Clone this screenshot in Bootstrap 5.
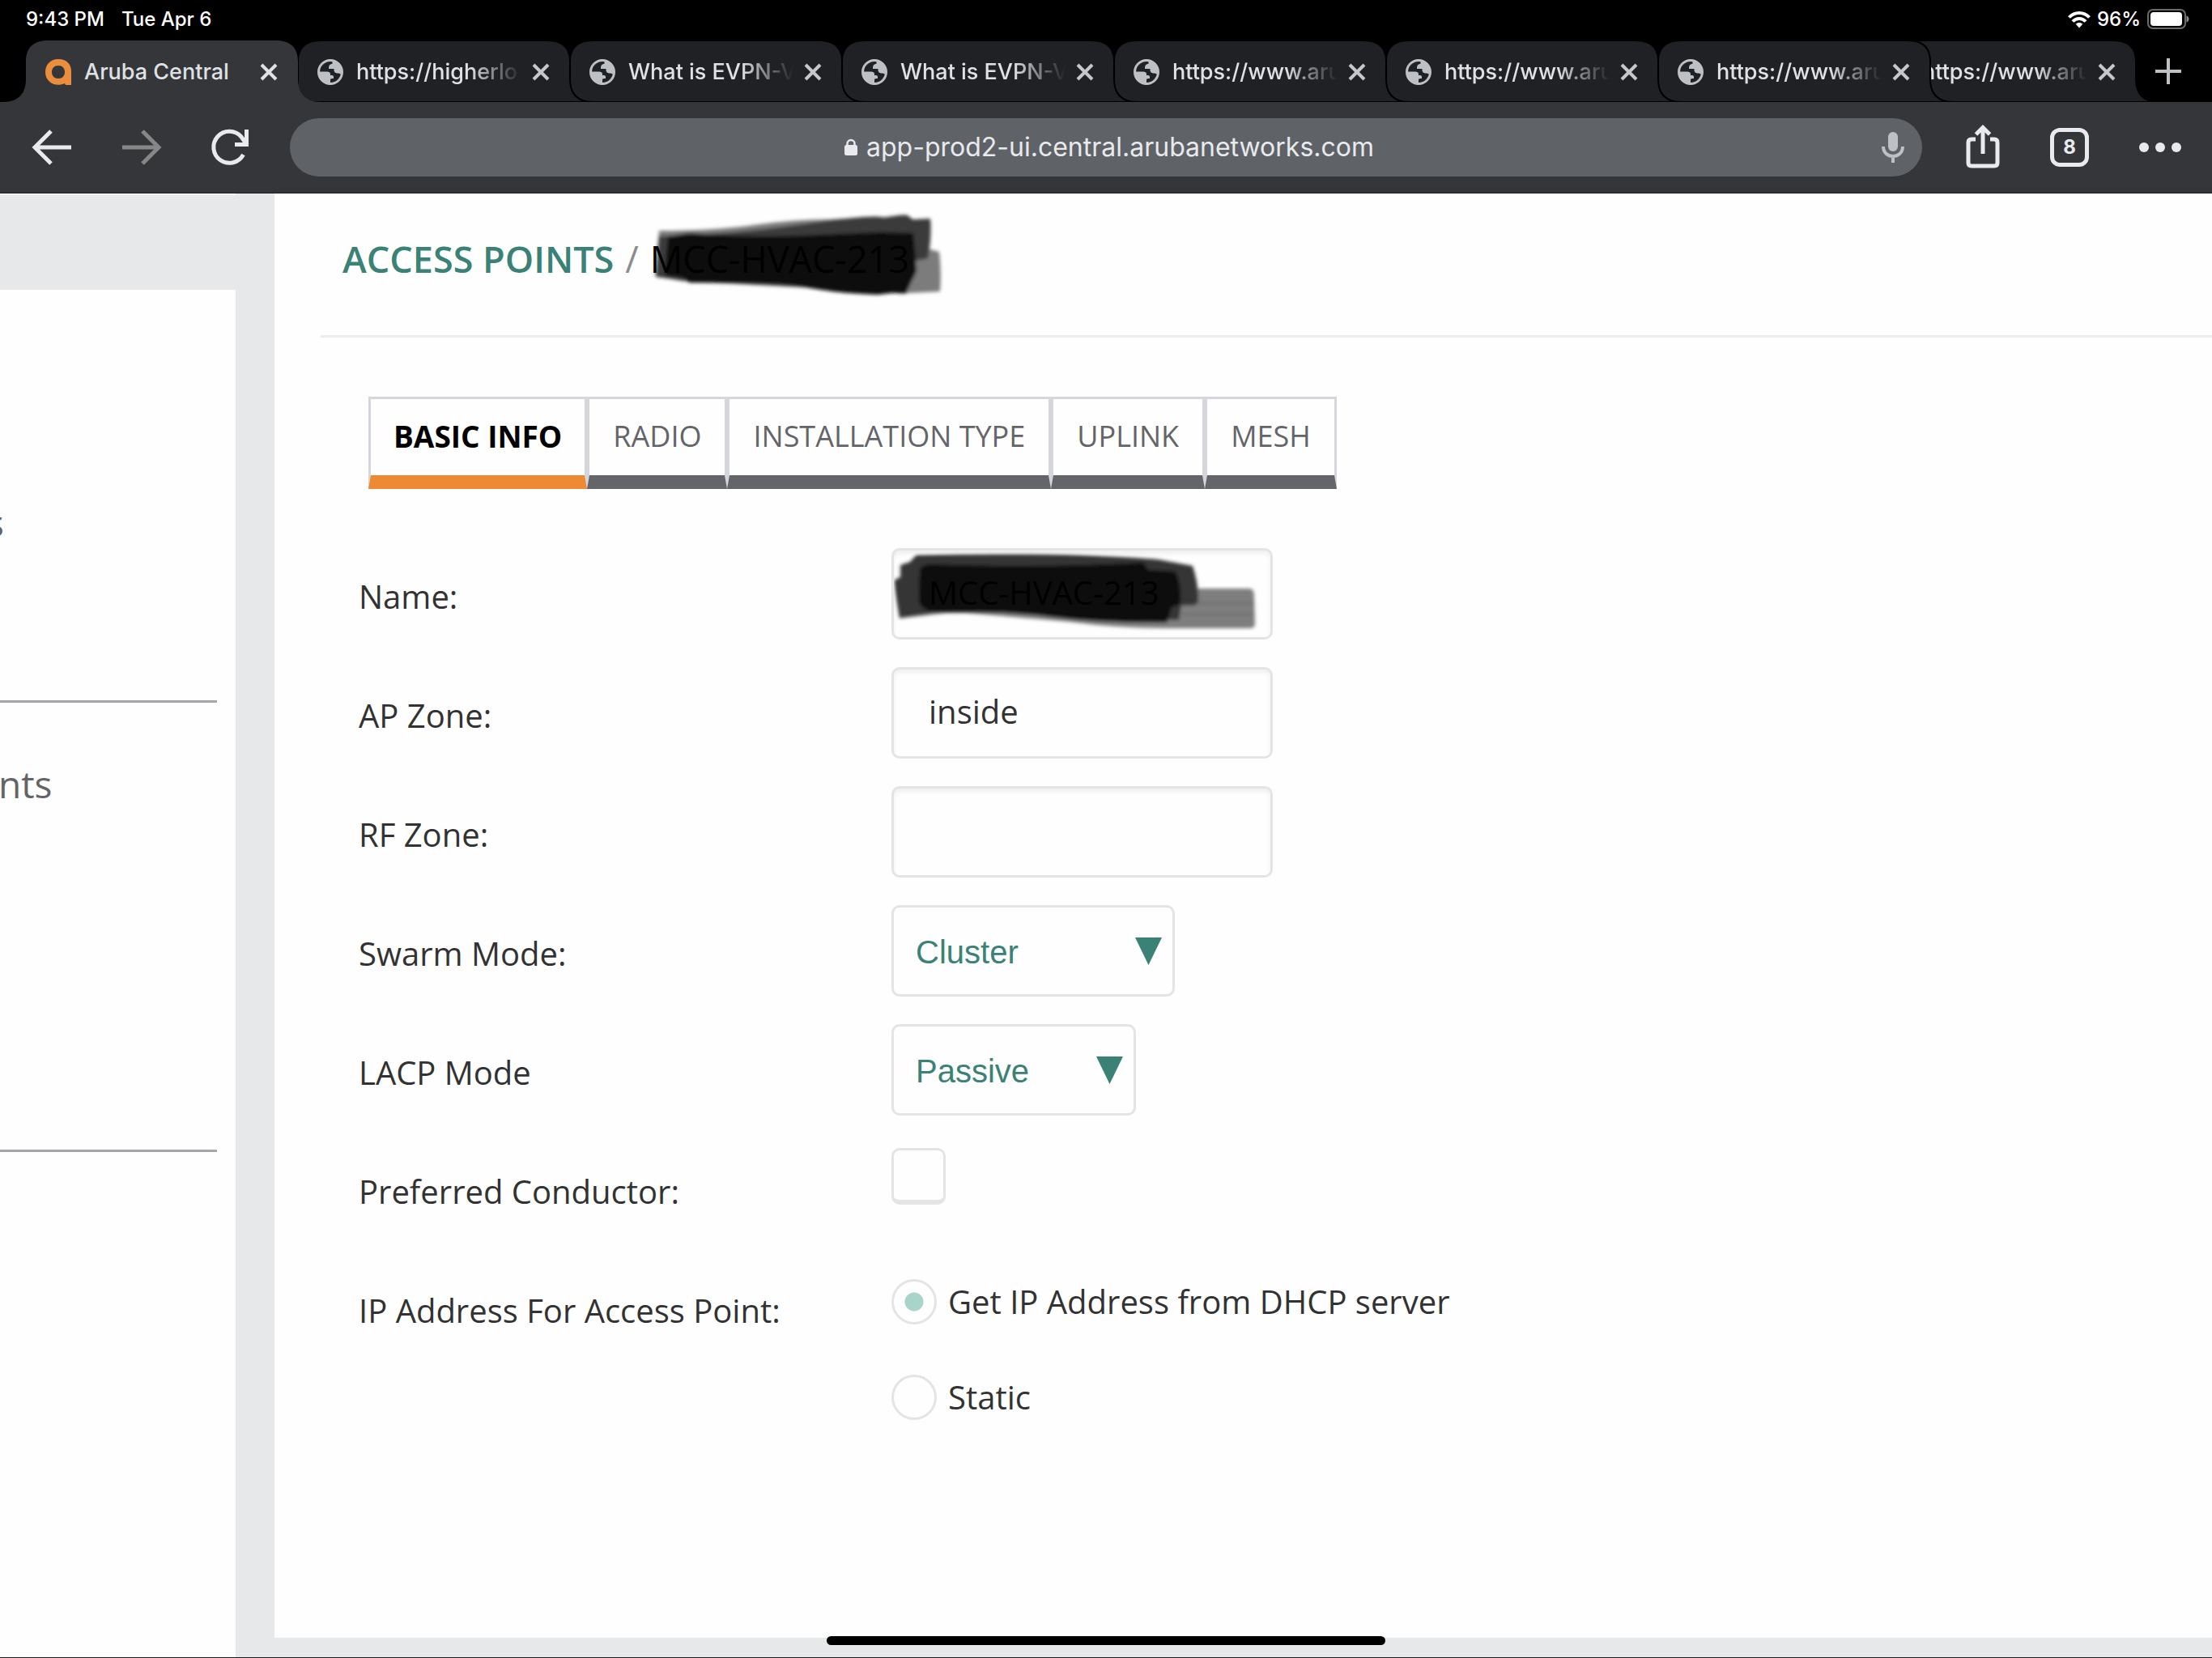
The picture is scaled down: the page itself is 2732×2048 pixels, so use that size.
<!DOCTYPE html>
<html lang="en">
<head>
<meta charset="utf-8">
<meta name="viewport" content="width=device-width, initial-scale=1">
<title>Aruba Central</title>
<link href="https://cdn.jsdelivr.net/npm/bootstrap@5.3.0/dist/css/bootstrap.min.css" rel="stylesheet">
<style>
  :root { --chrome: #35363a; --teal: #3a8275; --page-grey: #e6e8ea; --line: #e4e4e4; }
  body { font-family: "Open Sans", sans-serif; font-size: 40px; line-height: 60px; color: #323232; background: #fefefe; overflow-x: hidden; border-bottom: 1px solid #1c1c20; }
  svg { display: block; flex: none; }
  .browser { font-family: Inter, sans-serif; }
  .status { height: 50px; padding: 0 28px 2px 32px; font-size: 24px; line-height: 48px; font-weight: 500; }
  .status-date { margin-left: 21px; }
  .strip { height: 76px; padding-left: 32px; background: #000; }
  .strip-tab { width: 336px; height: 76px; padding: 2px 24px 0; flex: none; font-size: 27px; line-height: 40px; font-weight: 500; color: #dfe1e5; isolation: isolate; }
  .strip-tab .shape { position: absolute; left: -28px; top: 0; z-index: -1; fill: #202124; stroke: #000; stroke-width: 2; }
  .strip-tab.current .shape { fill: var(--chrome); stroke: none; }
  .strip-tab.tucked { margin-left: -82px; }
  .strip-title { width: 204px; margin-left: 16px; white-space: nowrap; overflow: hidden; color: inherit; text-decoration: none; flex: none; }
  .faded .strip-title { -webkit-mask-image: linear-gradient(90deg, #000 140px, transparent 204px); mask-image: linear-gradient(90deg, #000 140px, transparent 204px); }
  .bare { border: 0; background: none; padding: 0; color: inherit; }
  .close-x { margin-left: 13px; color: #c4c7cc; }
  .current .close-x { color: #dfe1e5; }
  .toolbar { height: 113px; background: var(--chrome); border-bottom: 1px solid #1a1a1c; padding: 0 34px 0 36px; color: #e8eaed; }
  .nav-icons { width: 322px; gap: 55px; }
  .omnibox { height: 72px; border-radius: 36px; background: #5f6368; padding: 0 20px; }
  .omnibox input { width: 628px; margin-left: 10px; font-size: 32px; line-height: 40px; color: #e8eaed; outline: 0; }
  .side-space { width: 40px; }
  .tool-icons { gap: 58px; margin-left: 50px; }
  .tab-count { width: 48px; height: 48px; border: 5px solid #e8eaed; border-radius: 12px; font-size: 24px; line-height: 38px; font-weight: 700; }
  .side { width: 291px; flex: none; overflow: hidden; font-size: 46px; line-height: 60px; color: #646468; }
  .side-top { height: 119px; background: var(--page-grey); border-top: 2px solid #fff; }
  .side a { color: inherit; text-decoration: none; display: block; }
  .side-group { border-bottom: 3px solid #a3a6ab; margin-right: 23px; }
  .g-one { height: 510px; padding-top: 257px; }
  .g-one a { margin-left: -17px; }
  .g-two { height: 555px; padding-top: 70px; }
  .g-two a { margin-left: -2px; }
  .main-wrap { background: var(--page-grey); padding: 0 0 24px 48px; min-width: 0; }
  .panel { background: #fefefe; padding-left: 57px; }
  .title-row { height: 178px; padding: 51px 0 0 27px; border-bottom: 3px solid #ebebf0; }
  .breadcrumb { font-size: 45px; line-height: 60px; --bs-breadcrumb-item-padding-x: 14px; --bs-breadcrumb-divider-color: #8c8c90; }
  .breadcrumb a { color: var(--teal); font-weight: 600; text-decoration: none; }
  .breadcrumb .active { color: #000; }
  .scribble { position: absolute; z-index: -1; }
  .info-tabs { margin: 73px 0 0 59px; font-size: 36px; line-height: 54px; }
  .info-tabs .nav-link { color: #646569; border: 3px solid #d5d6dc; border-bottom: 17px solid #646569; border-radius: 0; padding: 19px 29px 21px; height: 114px; }
  .info-tabs .nav-link.active { color: #000; font-size: 37px; font-weight: 700; border-bottom-color: #ee8a33; padding: 19px 28px 21px; }
  .fields { margin: 73px 0 0 47px; }
  .field { min-height: 147px; }
  .field-name { width: 658px; padding-top: 30px; flex: none; }
  .box { height: 113px; border: 3px solid var(--line); border-radius: 10px; background-color: #fefefe; font-size: 40px; line-height: 60px; }
  input.box { width: 471px; padding: 0 43px 4px; color: #323232; box-shadow: inset 0 4px 5px #efefef; }
  .masked { isolation: isolate; }
  .masked input.box { background: transparent; color: #000; }
  select.box { font-family: "Liberation Sans", sans-serif; color: var(--teal); padding: 2px 54px 0 27px; background-image: url("data:image/svg+xml,%3Csvg xmlns='http://www.w3.org/2000/svg' viewBox='0 0 33 34'%3E%3Cpath fill='%233a8275' d='M0 0h33L16.500 34z'/%3E%3C/svg%3E"); background-size: 33px 34px; background-position: right 13px center; }
  .swarm { width: 350px; }
  .lacp { width: 302px; }
  .form-check-input.tick { width: 67px; height: 70px; margin: 6px 0 0; border: 3px solid var(--line); border-bottom-width: 6px; border-radius: 10px; background-color: #fefefe; }
  .form-check-input.dot { width: 56px; height: 56px; margin: 0; border: 3px solid var(--line); background-color: #fefefe; flex: none; }
  .form-check-input.dot:checked { background-image: radial-gradient(circle, #a9d4c9 11px, transparent 12px); border-color: var(--line); }
  .radios { padding-top: 19px; gap: 58px; }
  .radios .form-check { gap: 14px; min-height: 60px; }
  .home-bar { position: absolute; bottom: 15px; left: 50%; transform: translateX(-50%); width: 690px; height: 11px; border-radius: 6px; background: #000; }
</style>
</head>
<body class="d-flex flex-column min-vh-100 position-relative">

<svg width="0" height="0" class="position-absolute" aria-hidden="true">
  <defs>
    <symbol id="tabshape" viewBox="-28 0 392 76"><path d="M-28 76C-8 76 0 64 0 48V26C0 10 8 0 28 0H308C328 0 336 10 336 26V48C336 64 344 76 364 76Z"/></symbol>
    <symbol id="globe" viewBox="0 0 32 32"><circle cx="16" cy="16" r="14.500" fill="none" stroke="#bdc1c6" stroke-width="3"/><path fill="#bdc1c6" d="M1.500 15.500H12c2.500 0 4 1 4 3V20h2c1.500 0 2 .8 2 2v2h-2c-1.500 0-2 .8-2 2v5C8 31 1 24 1.500 15.500zM18.500 2C25 3 30.500 9 30.500 16v4c-1.500-1.500-3-2.500-4.500-2.500-4 0-5.500-1.500-5.500-4V12H14c0-4 1-6 4.500-6z"/></symbol>
    <symbol id="cross" viewBox="0 0 22 22"><path d="M2 2l18 18M20 2L2 20" fill="none" stroke="currentColor" stroke-width="4"/></symbol>
    <filter id="soft" x="-5%" y="-10%" width="110%" height="120%"><feGaussianBlur stdDeviation="2"/></filter>
  </defs>
</svg>

<header class="browser">
  <div class="status bg-black text-white d-flex align-items-center">
    <span>9:43 PM</span><span class="status-date">Tue Apr 6</span>
    <svg class="ms-auto" width="28" height="22" viewBox="0 0 28 22" fill="none" stroke="#fff" stroke-width="4"><path d="M1.500 8.500C8.500 1 19.500 1 26.500 8.500M6 13.500c4.500-4.800 11.500-4.800 16 0"/><path d="M14 21.500l-4.300-4.700c2.400-2.400 6.200-2.400 8.600 0z" fill="#fff" stroke="none"/></svg>
    <span class="ms-2">96%</span>
    <svg class="ms-2" width="52" height="26" viewBox="0 0 52 26"><rect x="1" y="1" width="46" height="23" rx="6" fill="none" stroke="#6b6b6b" stroke-width="2"/><rect x="4" y="4" width="39" height="17" rx="4" fill="#fff"/><path d="M48.500 8.500c4 1 4 7 0 8z" fill="#8a8a8a"/></svg>
  </div>

  <nav class="strip d-flex position-relative z-0" aria-label="Open tabs">
    <div class="strip-tab current position-relative d-flex align-items-center" style="z-index:8">
      <svg class="shape" width="392" height="76"><use href="#tabshape"/></svg>
      <svg width="32" height="32" viewBox="0 0 32 32"><path fill="#ea8d3c" fill-rule="evenodd" d="M16 0C26 0 32 6 32 15v17h-7l-1-2C13 35 0 29 0 16 0 7 6 0 16 0zm0 8c-5 0-8 3.500-8 8s3 8 8 8 8-3.500 8-8-3-8-8-8z"/></svg>
      <a class="strip-title" href="#">Aruba Central</a>
      <button class="bare close-x" aria-label="Close tab"><svg width="22" height="22"><use href="#cross"/></svg></button>
    </div>
    <div class="strip-tab faded position-relative d-flex align-items-center" style="z-index:7">
      <svg class="shape" width="392" height="76"><use href="#tabshape"/></svg>
      <svg width="32" height="32"><use href="#globe"/></svg>
      <a class="strip-title" href="#">https://higherlo</a>
      <button class="bare close-x" aria-label="Close tab"><svg width="22" height="22"><use href="#cross"/></svg></button>
    </div>
    <div class="strip-tab faded position-relative d-flex align-items-center" style="z-index:6">
      <svg class="shape" width="392" height="76"><use href="#tabshape"/></svg>
      <svg width="32" height="32"><use href="#globe"/></svg>
      <a class="strip-title" href="#">What is EVPN-V</a>
      <button class="bare close-x" aria-label="Close tab"><svg width="22" height="22"><use href="#cross"/></svg></button>
    </div>
    <div class="strip-tab faded position-relative d-flex align-items-center" style="z-index:5">
      <svg class="shape" width="392" height="76"><use href="#tabshape"/></svg>
      <svg width="32" height="32"><use href="#globe"/></svg>
      <a class="strip-title" href="#">What is EVPN-V</a>
      <button class="bare close-x" aria-label="Close tab"><svg width="22" height="22"><use href="#cross"/></svg></button>
    </div>
    <div class="strip-tab faded position-relative d-flex align-items-center" style="z-index:4">
      <svg class="shape" width="392" height="76"><use href="#tabshape"/></svg>
      <svg width="32" height="32"><use href="#globe"/></svg>
      <a class="strip-title" href="#">https://www.aru</a>
      <button class="bare close-x" aria-label="Close tab"><svg width="22" height="22"><use href="#cross"/></svg></button>
    </div>
    <div class="strip-tab faded position-relative d-flex align-items-center" style="z-index:3">
      <svg class="shape" width="392" height="76"><use href="#tabshape"/></svg>
      <svg width="32" height="32"><use href="#globe"/></svg>
      <a class="strip-title" href="#">https://www.aru</a>
      <button class="bare close-x" aria-label="Close tab"><svg width="22" height="22"><use href="#cross"/></svg></button>
    </div>
    <div class="strip-tab faded position-relative d-flex align-items-center" style="z-index:2">
      <svg class="shape" width="392" height="76"><use href="#tabshape"/></svg>
      <svg width="32" height="32"><use href="#globe"/></svg>
      <a class="strip-title" href="#">https://www.aru</a>
      <button class="bare close-x" aria-label="Close tab"><svg width="22" height="22"><use href="#cross"/></svg></button>
    </div>
    <div class="strip-tab tucked faded position-relative d-flex align-items-center" style="z-index:1">
      <svg class="shape" width="392" height="76"><use href="#tabshape"/></svg>
      <svg width="32" height="32"><use href="#globe"/></svg>
      <a class="strip-title" href="#">https://www.aru</a>
      <button class="bare close-x" aria-label="Close tab"><svg width="22" height="22"><use href="#cross"/></svg></button>
    </div>
    <button class="bare position-relative z-1 ms-4 flex-shrink-0" aria-label="New tab"><svg width="32" height="32" viewBox="0 0 32 32" stroke="#bdc1c6" stroke-width="4"><path d="M16 0v32M0 16h32"/></svg></button>
  </nav>

  <div class="toolbar d-flex align-items-center">
    <div class="nav-icons d-flex align-items-center flex-shrink-0">
      <button class="bare" aria-label="Back"><svg width="56" height="48" viewBox="0 0 56 48" fill="none" stroke="currentColor" stroke-width="5"><path d="M52 24H8M27 4L7 24l20 20"/></svg></button>
      <button class="bare" aria-label="Forward"><svg width="56" height="48" viewBox="0 0 56 48" fill="none" stroke="#878787" stroke-width="5"><path d="M4 24h44M29 4l20 20-20 20"/></svg></button>
      <button class="bare" aria-label="Reload"><svg width="52" height="48" viewBox="0 0 52 48" fill="none" stroke="currentColor" stroke-width="5"><path d="M42.500 33A19.500 19.500 0 1 1 40 11l5 7"/><path d="M46.500 2v18.500H32"/></svg></button>
    </div>
    <div class="omnibox d-flex align-items-center flex-grow-1">
      <div class="side-space"></div>
      <div class="d-flex align-items-center justify-content-center flex-grow-1">
        <svg width="18" height="22" viewBox="0 0 18 22"><path d="M4.500 9V6.500a4.500 4.500 0 0 1 9 0V9" fill="none" stroke="#e8eaed" stroke-width="2.500"/><rect x="1" y="8" width="16" height="13" rx="2.500" fill="#e8eaed"/></svg>
        <input class="bare" type="text" aria-label="Address" value="app-prod2-ui.central.arubanetworks.com">
      </div>
      <button class="bare" aria-label="Voice search"><svg width="32" height="40" viewBox="0 0 32 40"><rect x="10" y="1" width="12" height="24" rx="6" fill="#bdc1c6"/><path d="M4 19c0 16 24 16 24 0M16 31v8" fill="none" stroke="#bdc1c6" stroke-width="4"/></svg></button>
    </div>
    <div class="tool-icons d-flex align-items-center flex-shrink-0">
      <button class="bare" aria-label="Share"><svg width="50" height="58" viewBox="-2 0 50 58" fill="none" stroke="currentColor" stroke-width="5"><path d="M14 19H9q-4 0-4 4v25q0 4 4 4h28q4 0 4-4V23q0-4-4-4h-5"/><path d="M23 37V5M14.500 13L23 4.500l8.500 8.500"/></svg></button>
      <button class="bare tab-count" aria-label="8 open tabs">8</button>
      <button class="bare" aria-label="More"><svg width="60" height="14" viewBox="0 0 60 14" fill="currentColor"><circle cx="10" cy="7" r="6"/><circle cx="30" cy="7" r="6"/><circle cx="50" cy="7" r="6"/></svg></button>
    </div>
  </div>
</header>

<div class="d-flex flex-grow-1">
  <aside class="side">
    <div class="side-top"></div>
    <div class="side-group g-one"><a href="#">s</a></div>
    <div class="side-group g-two"><a href="#">nts</a></div>
  </aside>

  <div class="main-wrap flex-grow-1 d-flex">
    <main class="panel flex-grow-1">
      <div class="title-row">
        <ol class="breadcrumb mb-0">
          <li class="breadcrumb-item"><a href="#">ACCESS POINTS</a></li>
          <li class="breadcrumb-item active position-relative masked">MCC-HVAC-213
            <svg class="scribble top-0 start-0" width="440" height="110" viewBox="757 288 440 110" overflow="visible" aria-hidden="true">
              <g filter="url(#soft)">
                <path fill="#7c7c7c" d="M813 283Q880 283 930 276T1020 269L1117 265L1124 300L1159 309Q1162 335 1160 358L1120 360L840 345L808 338Z"/>
                <path fill="#3a3a3a" d="M813 290Q900 288 990 275T1090 267Q1115 262 1120 264L1126 269L1148 268Q1150 290 1145 317L1130 320L1118 361L1000 353L845 345L809 340Z"/>
                <path fill="#0a0a0a" d="M824 290L851 286Q920 292 990 289T1086 285L1127 286L1131 333L1118 360L1100 360L1083 362Q1040 361 1007 355T950 348L850 347L843 341L820 338Z"/>
              </g>
            </svg>
          </li>
        </ol>
      </div>

      <ul class="nav info-tabs">
        <li class="nav-item"><a class="nav-link active" href="#">BASIC INFO</a></li>
        <li class="nav-item"><a class="nav-link" href="#">RADIO</a></li>
        <li class="nav-item"><a class="nav-link" href="#">INSTALLATION TYPE</a></li>
        <li class="nav-item"><a class="nav-link" href="#">UPLINK</a></li>
        <li class="nav-item"><a class="nav-link" href="#">MESH</a></li>
      </ul>

      <form class="fields">
        <div class="field d-flex align-items-start">
          <label class="field-name" for="apname">Name:</label>
          <div class="position-relative masked">
            <svg class="scribble top-0 start-0" width="470" height="112" viewBox="1101 677 470 112" aria-hidden="true">
              <g filter="url(#soft)">
                <path fill="#7e7e7e" d="M1440 727H1543Q1549 727 1549 736L1550 771Q1550 776 1543 776H1440Q1380 776 1320 768L1180 756L1111 764L1104 720Z"/>
                <path stroke="#6a6a6a" stroke-width="2" d="M1460 745h88M1460 759h88"/>
                <path fill="#343434" d="M1103 717L1112 713V698L1124 694L1132 685Q1250 681 1330 685T1430 691L1473 699Q1480 720 1480 740Q1480 748 1472 748H1459L1456 766L1330 763L1239 757L1153 757L1111 763Z"/>
                <path fill="#0a0a0a" d="M1136 703Q1140 697 1150 697Q1290 702 1412 695L1418 704L1452 706Q1460 725 1457 747L1447 750L1441 769Q1360 770 1290 761T1153 756Q1135 752 1135 740Z"/>
              </g>
            </svg>
            <input class="form-control box" id="apname" type="text" value="MCC-HVAC-213">
          </div>
        </div>
        <div class="field d-flex align-items-start">
          <label class="field-name" for="apzone">AP Zone:</label>
          <div><input class="form-control box" id="apzone" type="text" value="inside"></div>
        </div>
        <div class="field d-flex align-items-start">
          <label class="field-name" for="rfzone">RF Zone:</label>
          <div><input class="form-control box" id="rfzone" type="text"></div>
        </div>
        <div class="field d-flex align-items-start">
          <label class="field-name" for="swarm">Swarm Mode:</label>
          <div><select class="form-select box swarm" id="swarm"><option>Cluster</option></select></div>
        </div>
        <div class="field d-flex align-items-start">
          <label class="field-name" for="lacp">LACP Mode</label>
          <div><select class="form-select box lacp" id="lacp"><option>Passive</option></select></div>
        </div>
        <div class="field d-flex align-items-start">
          <label class="field-name" for="conductor">Preferred Conductor:</label>
          <input class="form-check-input tick" id="conductor" type="checkbox">
        </div>
        <div class="field d-flex align-items-start" role="radiogroup" aria-labelledby="iplabel">
          <span class="field-name" id="iplabel">IP Address For Access Point:</span>
          <div class="radios d-flex flex-column">
            <div class="form-check d-flex align-items-center p-0 m-0"><input class="form-check-input dot" type="radio" name="ip" id="dhcp" checked><label for="dhcp">Get IP Address from DHCP server</label></div>
            <div class="form-check d-flex align-items-center p-0 m-0"><input class="form-check-input dot" type="radio" name="ip" id="fixedip"><label for="fixedip">Static</label></div>
          </div>
        </div>
      </form>
    </main>
  </div>
</div>
<div class="home-bar"></div>
<script src="https://cdn.jsdelivr.net/npm/bootstrap@5.3.0/dist/js/bootstrap.bundle.min.js"></script>
</body>
</html>
